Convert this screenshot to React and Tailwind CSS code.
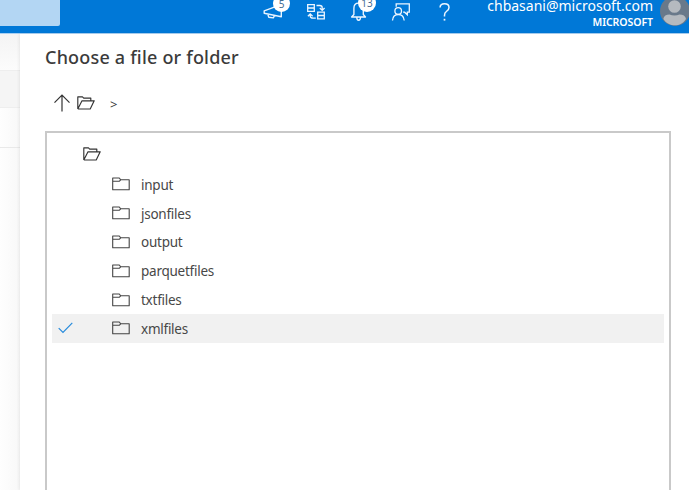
const folders = ['input', 'jsonfiles', 'output', 'parquetfiles', 'txtfiles', 'xmlfiles'];

function OpenFolder() {
  return (
    <svg className="h-[14px] w-[18px] shrink-0" viewBox="0 0 18 14" fill="none" stroke="#333" strokeWidth="1.15" strokeLinejoin="round">
      <path d="M.8 13V.9h4.7l1.2 1.2h7.1v2.7M.8 13h12.4l4-8.2H5L.8 13" />
    </svg>
  );
}

function ClosedFolder() {
  return (
    <svg className="h-[14px] w-[18px] shrink-0" viewBox="0 0 18 14" fill="none" stroke="#444" strokeWidth="1.1" strokeLinejoin="round">
      <path d="M.7 12.8V1h6.6l1.4 1.8h8.5v10zM.7 4.3h6.5l1.5-1.5" />
    </svg>
  );
}

function Header() {
  return (
    <header className="flex h-[33px] shrink-0 items-start overflow-hidden bg-[#0078d7] text-white">
      <div className="h-[26px] w-[60px] shrink-0 rounded-br-[2px] bg-[#b3d6f3]" />
      <div className="relative ml-[202px] h-[33px] w-[30px] shrink-0">
        <svg className="h-[33px] w-[30px]" viewBox="0 0 30 33" fill="none" stroke="#e9f4ff" strokeWidth="1.4" strokeLinejoin="round">
          <path d="M19.3 4v12.7L2.2 13.2v-2.4L19 4.7M5.7 14l1.1 3.2 4.5.7 1.3-2.4" />
        </svg>
        <span className="absolute left-[11px] top-[-5px] flex h-[17px] w-[17px] items-center justify-center rounded-full bg-white text-[10px] leading-none text-[#426b91]">5</span>
      </div>
      <svg className="ml-[14px] h-[33px] w-[20px] shrink-0" viewBox="0 0 20 33" fill="none" stroke="#edf6ff" strokeWidth="1.3">
        <path d="M1.7 4.6h6.6v6.7H1.7zM1.7 8h6.6M11.7 12.2h6.6v6.7h-6.6zM11.7 15.5h6.6M10.5 5.5h3.3c1.6 0 2.4.8 2.4 2.2v2.4M13.8 8l2.4 2.4L18.6 8M9.8 18.2H7.2c-1.9 0-3-.8-3-2.5v-1.4M1.9 16.2l2.3-2.3 2.4 2.3" />
      </svg>
      <div className="relative ml-[24px] h-[33px] w-[30px] shrink-0">
        <svg className="h-[33px] w-[20px]" viewBox="0 0 20 33" fill="none" stroke="#edf6ff" strokeWidth="1.35" strokeLinejoin="round">
          <path d="M3.9 14.5V8.3c0-3.3 1.8-5.2 4.6-5.2 2.9 0 4.8 1.9 4.8 5.2v6.2l2.2 2.5H1.6zM6.8 17.2c0 2 .6 3 1.8 3s1.9-1 1.9-3" />
        </svg>
        <span className="absolute left-[8px] top-[-6px] flex h-[18px] w-[18px] items-center justify-center rounded-full bg-white text-[10px] leading-none text-[#426b91]">13</span>
      </div>
      <svg className="ml-[11px] h-[33px] w-[22px] shrink-0" viewBox="0 0 22 33" fill="none" stroke="#edf6ff" strokeWidth="1.3">
        <path d="M5.2 6.7V3.8h13.1v8.4h-2v2.5l-2.7-2.5h-1.5" />
        <circle cx="7.2" cy="11" r="3.3" />
        <path d="M1.5 20.5c.3-4 2.5-6 5.8-6s5.5 2 5.9 6" />
      </svg>
      <svg className="ml-[25px] h-[33px] w-[14px] shrink-0" viewBox="0 0 14 33" fill="none" stroke="#edf6ff" strokeWidth="1.5">
        <path d="M2.1 7.5c0-2.5 1.7-3.8 4.4-3.8 2.8 0 4.5 1.4 4.5 3.7 0 2-1.1 3-2.6 4.1-1.4 1-1.9 1.8-1.9 3.7v1.2" />
        <path d="M6.5 18.8v1.8" strokeWidth="1.7" />
      </svg>
      <div className="ml-auto mr-[7px] text-right">
        <div className="mt-[-3px] h-[18px] whitespace-nowrap text-[14px] leading-[18px]">chbasani@microsoft.com</div>
        <div className="h-[14px] text-[10.5px] font-semibold leading-[14px] tracking-[-0.05px]">MICROSOFT</div>
      </div>
      <svg className="mt-[-4px] h-[30px] w-[29px] shrink-0" viewBox="0 0 29 30">
        <circle cx="15" cy="15" r="15" fill="#69798a" />
        <circle cx="14.5" cy="10.5" r="6.3" fill="#b5babf" />
        <path d="M3.3 23c.5-3.2 3-4.5 6.2-4.5 2.8 1.4 7.2 1.4 10 0 3.5 0 6 1.4 6.5 4.5C23 27.5 19.5 29.3 15 29.3S6.3 27.5 3.3 23" fill="#b5babf" />
      </svg>
    </header>
  );
}

export default function App() {
  return (
    <div className="flex h-[490px] w-[689px] flex-col overflow-hidden bg-white font-['Noto_Sans',sans-serif] text-[#3b3b3b]">
      <Header />
      <div className="flex min-h-0 flex-1 border-t border-[#a9d0f2]">
        <aside className="z-0 w-[20px] shrink-0 bg-linear-to-r from-[#fefefe] to-[#f8f8f8]">
          <div className="h-[37px] border-b border-[#eeeeee] bg-linear-to-b from-[#f4f4f4] to-[#fcfcfc]" />
          <div className="h-[37px] border-b border-[#eeeeee] bg-[#f5f5f5]" />
          <div className="h-[40px] border-b border-[#e9e9e9]" />
        </aside>
        <main className="z-10 flex min-w-0 flex-1 flex-col bg-white pl-[25px] pr-[18px] shadow-[-1px_0_3px_#00000012]">
          <h1 className="mt-[10px] h-[26px] whitespace-nowrap text-[18px] font-medium leading-[26px] tracking-[0.2px]">Choose a file or folder</h1>
          <div className="mt-[23px] flex h-[20px] items-center pl-[9px]">
            <svg className="h-[18px] w-[16px]" viewBox="0 0 16 18" fill="none" stroke="#333" strokeWidth="1.2">
              <path d="M8 17.5V1.2M.5 8.7 8 1.2l7.5 7.5" />
            </svg>
            <span className="ml-[7px] flex"><OpenFolder /></span>
            <span className="ml-[15px] pt-[3px] text-[13px]">&gt;</span>
          </div>
          <section className="mt-[18px] flex-1 border-2 border-b-0 border-[#c9c9c9] px-[5px] pt-[5px]">
            <div className="mb-px flex h-[31px] items-center pl-[31px]"><OpenFolder /></div>
            {folders.map((name) => (
              <div key={name} className={`flex h-[28.8px] items-center ${name === 'xmlfiles' ? 'bg-[#f1f1f1]' : ''}`}>
                <span className="w-[60px] shrink-0 pl-[6px]">
                  {name === 'xmlfiles' && (
                    <svg className="h-[12px] w-[15px]" viewBox="0 0 15 12" fill="none" stroke="#268bdc" strokeWidth="1.2">
                      <path d="m.7 6.1 4.3 4.3L14.3.9" />
                    </svg>
                  )}
                </span>
                <ClosedFolder />
                <span className="ml-[11px] pt-px text-[13.5px] leading-[20px] tracking-[-0.25px] text-[#484848]">{name}</span>
              </div>
            ))}
          </section>
        </main>
      </div>
    </div>
  );
}
